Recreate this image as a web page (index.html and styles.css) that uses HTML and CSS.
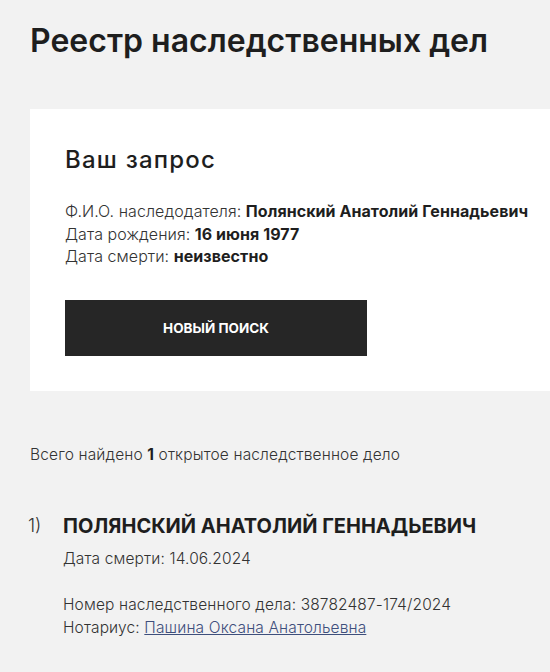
FILE: index.html
```html
<!DOCTYPE html>
<html lang="ru">
<head>
    <meta charset="UTF-8">
    <meta name="viewport" content="width=device-width, initial-scale=1.0">
    <title>Реестр наследственных дел</title>
    <link rel="stylesheet" href="styles.css">
</head>
<body>
    <h1 class="page-title">Реестр наследственных дел</h1>

    <div class="request-card">
        <h2>Ваш запрос</h2>
        <div class="request-info">
            <div>Ф.И.О. наследодателя: <b>Полянский Анатолий Геннадьевич</b></div>
            <div>Дата рождения: <b>16 июня 1977</b></div>
            <div>Дата смерти: <b>неизвестно</b></div>
        </div>
        <button class="search-btn">Новый поиск</button>
    </div>

    <p class="found">Всего найдено <b>1</b> открытое наследственное дело</p>

    <ol class="cases">
        <li class="case">
            <span class="case-num">1)</span>
            <div class="case-body">
                <div class="case-name">Полянский Анатолий Геннадьевич</div>
                <div class="case-death">Дата смерти: 14.06.2024</div>
                <div class="case-meta">
                    <div>Номер наследственного дела: 38782487-174/2024</div>
                    <div>Нотариус: <a href="#">Пашина Оксана Анатольевна</a></div>
                </div>
            </div>
        </li>
    </ol>
</body>
</html>
```

FILE: styles.css
```css
body {
    font-family: Inter, "Liberation Sans", Arial, sans-serif;
    margin: 0;
    padding: 0 0 0 30px;
    background-color: #f2f2f2;
    color: #222;
}
.page-title {
    font-size: 32px;
    font-weight: 600;
    line-height: 36px;
    margin: 23px 0 50px;
    color: #1e1e1e;
}
.request-card {
    background: white;
    padding: 37px 0 35px 35px;
}
.request-card h2 {
    font-size: 24px;
    font-weight: 500;
    line-height: 28px;
    letter-spacing: 1.2px;
    margin: 0 0 26px;
    color: #1e1e1e;
}
.request-info {
    font-size: 16px;
    font-weight: 300;
    line-height: 22.5px;
    letter-spacing: 0.06px;
    white-space: nowrap;
    color: #333;
}
.request-info b {
    font-weight: 700;
    color: #1e1e1e;
}
.search-btn {
    display: block;
    width: 302px;
    height: 56px;
    margin-top: 32px;
    background-color: #262626;
    color: white;
    border: none;
    font-family: inherit;
    font-size: 13.5px;
    font-weight: 700;
    text-transform: uppercase;
    cursor: pointer;
}
.found {
    font-size: 15.5px;
    font-weight: 300;
    line-height: 22px;
    letter-spacing: 0.14px;
    color: #333;
    margin: 53px 0 0;
}
.found b {
    font-weight: 700;
    color: #1e1e1e;
}
.cases {
    list-style: none;
    margin: 48px 0 0;
    padding: 0;
}
.case {
    display: flex;
}
.case-num {
    width: 35px;
    margin-left: -2px;
    font-size: 18px;
    font-weight: 300;
    line-height: 24px;
    color: #333;
}
.case-body {
    font-size: 15.5px;
    font-weight: 300;
    line-height: 22.5px;
    letter-spacing: 0.14px;
    color: #333;
}
.case-name {
    font-size: 20px;
    font-weight: 700;
    line-height: 24px;
    letter-spacing: 0;
    text-transform: uppercase;
    color: #1e1e1e;
    margin-bottom: 10px;
}
.case-meta {
    margin-top: 24px;
}
.case-meta a {
    color: #3e4f7c;
}
```
